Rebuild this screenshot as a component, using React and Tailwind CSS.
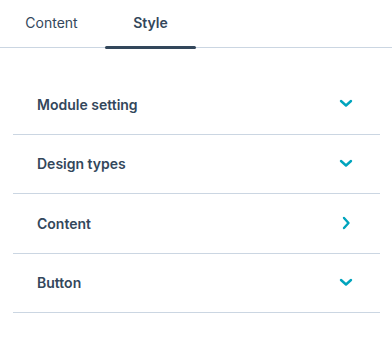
import React, { useState } from 'react';

const sections = [
  { id: 'module', title: 'Module setting', open: true },
  { id: 'design', title: 'Design types', open: true },
  { id: 'content', title: 'Content', open: false },
  { id: 'button', title: 'Button', open: true },
];

const Chevron = ({ down }) => (
  <svg
    width="14"
    height="14"
    viewBox="0 0 14 14"
    fill="none"
    stroke="#00a4bd"
    strokeWidth="2.4"
    strokeLinecap="round"
    strokeLinejoin="round"
    className={down ? '-mt-[2px]' : '-rotate-90'}
  >
    <path d="M2 5l5 4.5L12 5" />
  </svg>
);

const App = () => {
  const [tab, setTab] = useState('style');

  return (
    <div className="w-[392px] h-[339px] bg-white text-[#33475b] font-['Inter','Liberation_Sans',sans-serif]">
      {/* Tabs */}
      <div className="flex h-[48px] border-b border-[#cbd6e2]">
        <button
          onClick={() => setTab('content')}
          className="w-[103px] h-full flex items-center justify-center text-[14px] pb-[2px]"
        >
          Content
        </button>
        <button
          onClick={() => setTab('style')}
          className="relative w-[91px] ml-[2px] h-full flex items-center justify-center text-[14px] font-semibold pb-[2px]"
        >
          Style
          <span className="absolute left-0 right-0 bottom-[-2px] h-[3px] rounded-full bg-[#33475b]" />
        </button>
      </div>

      {/* Accordion */}
      <div className="pt-[27px] px-[13px] pr-[12px]">
        {sections.map((s) => (
          <div
            key={s.id}
            className="h-[59.5px] border-b border-[#cbd6e2] flex items-center justify-between pl-[24px] pr-[27px]"
          >
            <span className="text-[14px] font-semibold">{s.title}</span>
            <Chevron down={s.open} />
          </div>
        ))}
      </div>
    </div>
  );
};

export default App;
